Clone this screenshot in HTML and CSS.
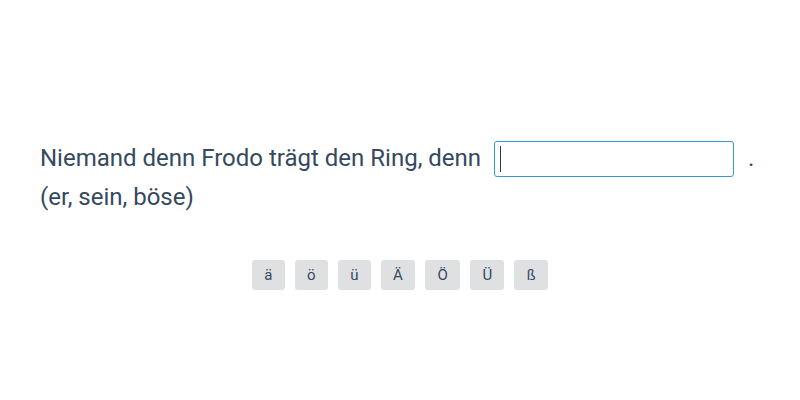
FILE: index.html
```html
<!DOCTYPE html>
<html lang="de">
<head>
    <meta charset="UTF-8">
    <meta name="viewport" content="width=device-width, initial-scale=1.0">
    <title>Lückentext</title>
    <link rel="stylesheet" href="styles.css">
</head>
<body>
    <div class="exercise">
        <p class="sentence">
            Niemand denn Frodo trägt den Ring, denn
            <span class="gap-wrap">
                <input type="text" class="gap" id="answer" placeholder=" " autofocus autocomplete="off">
                <span class="caret"></span>
            </span>
            .<br>
            (er, sein, böse)
        </p>
        <div class="umlauts">
            <button class="char-btn" onclick="insertChar('ä')">ä</button>
            <button class="char-btn" onclick="insertChar('ö')">ö</button>
            <button class="char-btn" onclick="insertChar('ü')">ü</button>
            <button class="char-btn" onclick="insertChar('Ä')">Ä</button>
            <button class="char-btn" onclick="insertChar('Ö')">Ö</button>
            <button class="char-btn" onclick="insertChar('Ü')">Ü</button>
            <button class="char-btn" onclick="insertChar('ß')">ß</button>
        </div>
    </div>

    <script>
        // Insert a special character at the caret position
        function insertChar(ch) {
            const input = document.getElementById('answer');
            const start = input.selectionStart;
            const end = input.selectionEnd;
            input.value = input.value.slice(0, start) + ch + input.value.slice(end);
            input.focus();
            input.setSelectionRange(start + 1, start + 1);
        }

        document.getElementById('answer').focus();
    </script>
</body>
</html>
```

FILE: styles.css
```css
* {
    margin: 0;
    padding: 0;
    box-sizing: border-box;
}

body {
    font-family: Roboto, 'Liberation Sans', sans-serif;
    background: #fff;
    color: #34495e;
}

.exercise {
    padding: 139px 40px 0;
}

.sentence {
    font-size: 24px;
    line-height: 1.6;
}

.gap-wrap {
    position: relative;
    display: inline-block;
    margin: 0 8px 0 7px;
    vertical-align: middle;
    top: -1px;
    line-height: 0;
}

.gap {
    width: 240px;
    height: 36px;
    padding: 0 5px;
    font-family: inherit;
    font-size: 24px;
    color: #34495e;
    border: 1px solid #3498db;
    border-radius: 3px;
    outline: none;
}

/* caret shown while the gap is still empty */
.caret {
    position: absolute;
    left: 6px;
    top: 5px;
    width: 1px;
    height: 26px;
    background: #2c3e50;
    pointer-events: none;
    display: none;
}

.gap:placeholder-shown + .caret {
    display: block;
}

.umlauts {
    display: flex;
    justify-content: center;
    gap: 10px;
    margin-top: 44px;
}

.char-btn {
    height: 30px;
    padding: 0 12.3px;
    font-family: Roboto, sans-serif;
    font-size: 15px;
    color: #34495e;
    background: #dfe0e2;
    border: none;
    border-radius: 3px;
    cursor: pointer;
}

.char-btn:hover {
    background: #d0d2d5;
}
```
